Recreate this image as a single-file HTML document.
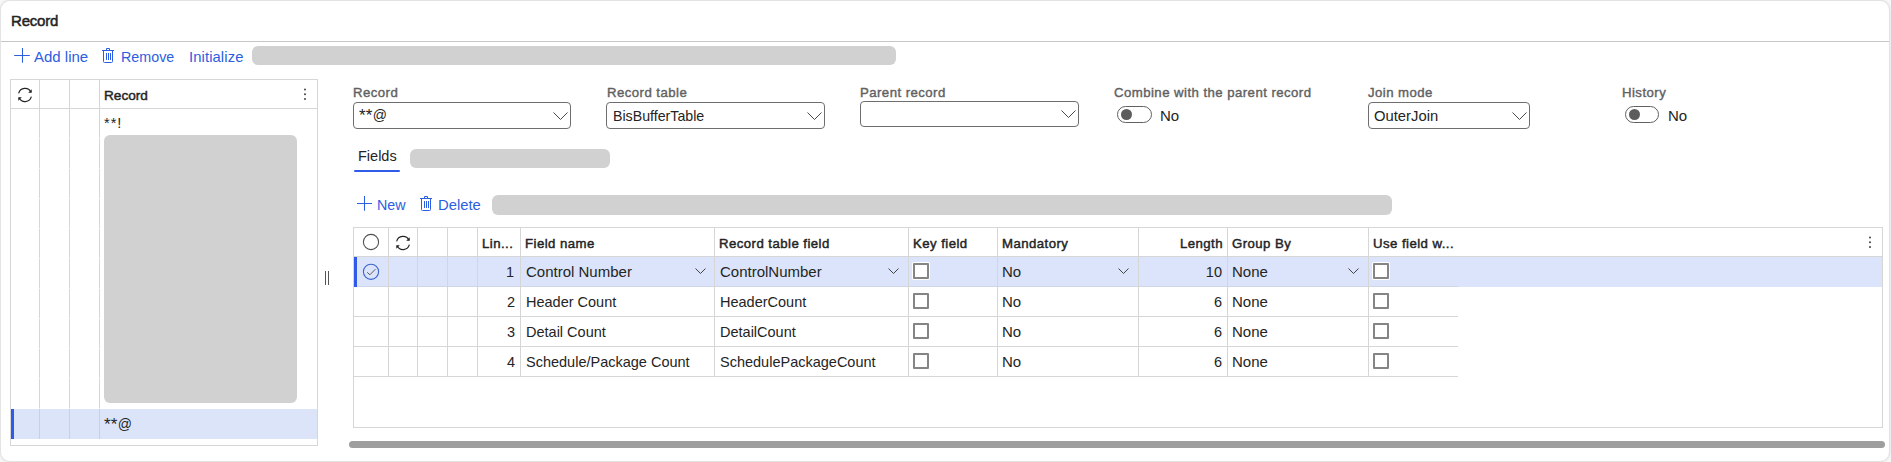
<!DOCTYPE html>
<html><head><meta charset="utf-8">
<style>
*{margin:0;padding:0;box-sizing:border-box}
html,body{width:1891px;height:462px;overflow:hidden;background:#f7f7f7;font-family:"Liberation Sans",sans-serif;color:#242424}
.card{position:absolute;left:0;top:0;width:1890px;height:462px;background:#fff;border:1px solid #e3e3e3;border-radius:10px;box-shadow:0 0 3px rgba(0,0,0,.10)}
.a{position:absolute;white-space:nowrap;line-height:1}
.bl{color:#2c5ee0}
.lbl{font-size:13.2px;letter-spacing:0.45px;-webkit-text-stroke:0.4px #616161;color:#616161}
.gph{position:absolute;background:#d1d1d1;border-radius:6px}
.hl{position:absolute;height:1px;background:#d6d6d6}
.vl{position:absolute;width:1px;background:#d6d6d6}
.inp{position:absolute;height:27px;border:1px solid #6e6e6e;border-radius:4px;background:#fff}
.hd{font-size:13.2px;letter-spacing:0.45px;-webkit-text-stroke:0.45px #242424;color:#242424}
.tx{font-size:14.5px;color:#242424}
.cb{position:absolute;width:16px;height:16px;border:2px solid #858585;border-radius:1px;background:#fff;box-shadow:0 0 0 1px #fff}
.tg{position:absolute;width:35px;height:17px;border:1px solid #616161;border-radius:9px;background:#fff}
.tg i{position:absolute;left:3px;top:2px;width:11px;height:11px;border-radius:50%;background:#5c5c5c}
svg{position:absolute;overflow:visible}
</style></head><body>
<div class="card"></div>

<!-- title -->
<div class="a" style="left:11px;top:13px;font-size:15px;letter-spacing:-0.2px;-webkit-text-stroke:0.5px #242424">Record</div>
<div class="hl" style="left:1px;top:41px;width:1888px;background:#c8c6c4"></div>

<!-- toolbar -->
<svg style="left:14px;top:48px" width="16" height="16" viewBox="0 0 16 16"><path d="M8.5 0V14.7M0.2 7.5H15.8" stroke="#2c5ee0" stroke-width="1.05" fill="none"/></svg>
<div class="a bl" style="left:34px;top:49px;font-size:15px">Add line</div>
<svg style="left:102px;top:48px" width="12" height="15" viewBox="0 0 12 15"><path d="M0 2.5H12M4.5 2.5V0.5H7.5V2.5M1.5 2.5V13.5Q1.5 14.5 2.5 14.5H9.5Q10.5 14.5 10.5 13.5V2.5M4.5 5V12M6.5 5V12M8.5 5V12" stroke="#2c5ee0" stroke-width="1" fill="none"/></svg>
<div class="a bl" style="left:121px;top:50px;font-size:14.3px">Remove</div>
<div class="a bl" style="left:189px;top:50px;font-size:14.8px;letter-spacing:0.1px">Initialize</div>
<div class="gph" style="left:252px;top:46px;width:644px;height:19px"></div>

<!-- left grid -->
<div style="position:absolute;left:10px;top:79px;width:308px;height:367px;border:1px solid #d6d6d6;background:#fff"></div>
<div class="hl" style="left:11px;top:108px;width:306px"></div>
<div class="vl" style="left:39px;top:80px;height:28px"></div>
<div class="vl" style="left:69px;top:80px;height:28px"></div>
<div class="vl" style="left:99px;top:80px;height:28px"></div>
<div class="vl" style="left:39px;top:109px;height:300px;background:repeating-linear-gradient(to bottom,#d6d6d6 0 29px,#eeeeee 29px 30px)"></div>
<div class="vl" style="left:69px;top:109px;height:300px;background:repeating-linear-gradient(to bottom,#d6d6d6 0 29px,#eeeeee 29px 30px)"></div>
<div class="vl" style="left:99px;top:109px;height:300px;background:repeating-linear-gradient(to bottom,#d6d6d6 0 29px,#eeeeee 29px 30px)"></div>
<svg style="left:17px;top:87px" width="16" height="16" viewBox="0 0 16 16"><path d="M1.625 6.29A6.6 6.6 0 0 1 13.98 5.21M14.375 9.71A6.6 6.6 0 0 1 2.02 10.79" stroke="#242424" stroke-width="1.15" fill="none"/><path d="M14.7 2.3V5.8H11.2Z M1.3 10.2H4.8L1.3 13.7Z" fill="#242424"/></svg>
<div class="a hd" style="left:104px;top:89px;font-size:13.6px;letter-spacing:0px">Record</div>
<svg style="left:303px;top:87px" width="4" height="14" viewBox="0 0 4 14"><circle cx="2" cy="2.5" r="1" fill="#424242"/><circle cx="2" cy="7.2" r="1" fill="#424242"/><circle cx="2" cy="11.9" r="1" fill="#424242"/></svg>
<div class="a tx" style="left:104px;top:116px;font-size:14.5px;letter-spacing:1px">**!</div>
<div class="gph" style="left:104px;top:135px;width:193px;height:268px"></div>
<div style="position:absolute;left:11px;top:409px;width:306px;height:30px;background:#dce4fa"></div>
<div style="position:absolute;left:11px;top:409px;width:3px;height:30px;background:#2f5be6"></div>
<div class="vl" style="left:39px;top:409px;height:30px;background:#cfcfd6"></div>
<div class="vl" style="left:69px;top:409px;height:30px;background:#cfcfd6"></div>
<div class="vl" style="left:99px;top:409px;height:30px;background:#cfcfd6"></div>
<div class="a tx" style="left:104px;top:417px;font-size:14px"><span style="font-size:17px;letter-spacing:0.2px;line-height:0;position:relative;top:1px">**</span>@</div>

<!-- splitter -->
<div class="vl" style="left:325px;top:271px;height:14px;background:#555"></div>
<div class="vl" style="left:328px;top:271px;height:14px;background:#555"></div>

<!-- form fields -->
<div class="a lbl" style="left:353px;top:86px">Record</div>
<div class="inp" style="left:353px;top:102px;width:218px"></div>
<div class="a tx" style="left:359px;top:108px;font-size:14px"><span style="font-size:17px;letter-spacing:0.2px;line-height:0;position:relative;top:1px">**</span>@</div>
<svg style="left:553px;top:112px" width="15" height="8" viewBox="0 0 15 8"><path d="M0.5 0.5L7.5 7.5L14.5 0.5" stroke="#4a4a4a" stroke-width="1" fill="none"/></svg>

<div class="a lbl" style="left:607px;top:86px">Record table</div>
<div class="inp" style="left:606px;top:102px;width:219px"></div>
<div class="a tx" style="left:613px;top:109px;font-size:14.2px">BisBufferTable</div>
<svg style="left:807px;top:112px" width="15" height="8" viewBox="0 0 15 8"><path d="M0.5 0.5L7.5 7.5L14.5 0.5" stroke="#4a4a4a" stroke-width="1" fill="none"/></svg>

<div class="a lbl" style="left:860px;top:86px">Parent record</div>
<div class="inp" style="left:860px;top:101px;width:219px;height:26px"></div>
<svg style="left:1061px;top:110px" width="15" height="8" viewBox="0 0 15 8"><path d="M0.5 0.5L7.5 7.5L14.5 0.5" stroke="#4a4a4a" stroke-width="1" fill="none"/></svg>

<div class="a lbl" style="left:1114px;top:86px">Combine with the parent record</div>
<div class="tg" style="left:1117px;top:106px"><i></i></div>
<div class="a tx" style="left:1160px;top:108px;font-size:15px">No</div>

<div class="a lbl" style="left:1368px;top:86px">Join mode</div>
<div class="inp" style="left:1368px;top:102px;width:162px"></div>
<div class="a tx" style="left:1374px;top:109px;font-size:14.8px">OuterJoin</div>
<svg style="left:1512px;top:112px" width="15" height="8" viewBox="0 0 15 8"><path d="M0.5 0.5L7.5 7.5L14.5 0.5" stroke="#4a4a4a" stroke-width="1" fill="none"/></svg>

<div class="a lbl" style="left:1622px;top:86px">History</div>
<div class="tg" style="left:1625px;top:106px;width:34px"><i></i></div>
<div class="a tx" style="left:1668px;top:108px;font-size:15px">No</div>

<!-- tab -->
<div class="a" style="left:358px;top:149px;font-size:14.5px;color:#242424">Fields</div>
<div style="position:absolute;left:354px;top:170px;width:46px;height:2px;border-radius:1px;background:#2f5be6"></div>
<div class="gph" style="left:410px;top:149px;width:200px;height:19px"></div>

<!-- fields toolbar -->
<svg style="left:357px;top:196px" width="16" height="16" viewBox="0 0 16 16"><path d="M7.5 0V14.8M0 7.5H15" stroke="#2c5ee0" stroke-width="1.05" fill="none"/></svg>
<div class="a bl" style="left:377px;top:198px;font-size:14.3px">New</div>
<svg style="left:420px;top:196px" width="12" height="15" viewBox="0 0 12 15"><path d="M0 2.5H12M4.5 2.5V0.5H7.5V2.5M1.5 2.5V13.5Q1.5 14.5 2.5 14.5H9.5Q10.5 14.5 10.5 13.5V2.5M4.5 5V12M6.5 5V12M8.5 5V12" stroke="#2c5ee0" stroke-width="1" fill="none"/></svg>
<div class="a bl" style="left:438px;top:198px;font-size:14.8px">Delete</div>
<div class="gph" style="left:492px;top:195px;width:900px;height:20px"></div>

<!-- main grid -->
<div style="position:absolute;left:353px;top:227px;width:1530px;height:201px;border:1px solid #d6d6d6;background:#fff"></div>
<div style="position:absolute;left:354px;top:257px;width:1528px;height:30px;background:#dbe4fa"></div>
<div style="position:absolute;left:354px;top:257px;width:3px;height:30px;background:#2f5be6"></div>
<div class="hl" style="left:354px;top:256px;width:1528px"></div>
<div class="hl" style="left:357px;top:286px;width:1101px;background:#cfd6ea"></div>
<div class="hl" style="left:354px;top:316px;width:1104px"></div>
<div class="hl" style="left:354px;top:346px;width:1104px"></div>
<div class="hl" style="left:354px;top:376px;width:1104px"></div>
<div class="vl" style="left:388px;top:228px;height:148px"></div>
<div class="vl" style="left:417px;top:228px;height:148px"></div>
<div class="vl" style="left:447px;top:228px;height:148px"></div>
<div class="vl" style="left:477px;top:228px;height:148px"></div>
<div class="vl" style="left:520px;top:228px;height:148px"></div>
<div class="vl" style="left:714px;top:228px;height:148px"></div>
<div class="vl" style="left:908px;top:228px;height:148px"></div>
<div class="vl" style="left:997px;top:228px;height:148px"></div>
<div class="vl" style="left:1138px;top:228px;height:148px"></div>
<div class="vl" style="left:1227px;top:228px;height:148px"></div>
<div class="vl" style="left:1368px;top:228px;height:148px"></div>

<!-- header -->
<svg style="left:362px;top:233px" width="18" height="18" viewBox="0 0 18 18"><circle cx="9" cy="9" r="7.6" stroke="#505050" stroke-width="1.1" fill="none"/></svg>
<svg style="left:395px;top:235px" width="16" height="16" viewBox="0 0 16 16"><path d="M1.625 6.29A6.6 6.6 0 0 1 13.98 5.21M14.375 9.71A6.6 6.6 0 0 1 2.02 10.79" stroke="#242424" stroke-width="1.15" fill="none"/><path d="M14.7 2.3V5.8H11.2Z M1.3 10.2H4.8L1.3 13.7Z" fill="#242424"/></svg>
<div class="a hd" style="left:482px;top:237px">Lin...</div>
<div class="a hd" style="left:525px;top:237px">Field name</div>
<div class="a hd" style="left:719px;top:237px">Record table field</div>
<div class="a hd" style="left:913px;top:237px">Key field</div>
<div class="a hd" style="left:1002px;top:237px">Mandatory</div>
<div class="a hd" style="left:1138px;top:237px;width:85px;text-align:right">Length</div>
<div class="a hd" style="left:1232px;top:237px">Group By</div>
<div class="a hd" style="left:1373px;top:237px">Use field w...</div>
<svg style="left:1868px;top:235px" width="4" height="14" viewBox="0 0 4 14"><circle cx="2" cy="2.5" r="1" fill="#424242"/><circle cx="2" cy="7.2" r="1" fill="#424242"/><circle cx="2" cy="11.9" r="1" fill="#424242"/></svg>

<!-- row 1 -->
<svg style="left:362px;top:263px" width="18" height="18" viewBox="0 0 18 18"><circle cx="9" cy="8.8" r="7.6" stroke="#3d64cf" stroke-width="1.1" fill="none"/><path d="M5.2 9.3L7.9 11.8L13.4 6.2" stroke="#5a5a5a" stroke-width="1" fill="none"/></svg>
<div class="a tx" style="left:478px;top:265px;width:36px;text-align:right">1</div>
<div class="a tx" style="left:526px;top:264px;font-size:15px">Control Number</div>
<svg style="left:695px;top:268px" width="11" height="7" viewBox="0 0 11 7"><path d="M0.5 0.5L5.5 5.5L10.5 0.5" stroke="#424242" stroke-width="1" fill="none"/></svg>
<div class="a tx" style="left:720px;top:264px;font-size:15px">ControlNumber</div>
<svg style="left:888px;top:268px" width="11" height="7" viewBox="0 0 11 7"><path d="M0.5 0.5L5.5 5.5L10.5 0.5" stroke="#424242" stroke-width="1" fill="none"/></svg>
<div class="cb" style="left:913px;top:263px"></div>
<div class="a tx" style="left:1002px;top:264px;font-size:15px">No</div>
<svg style="left:1118px;top:268px" width="11" height="7" viewBox="0 0 11 7"><path d="M0.5 0.5L5.5 5.5L10.5 0.5" stroke="#424242" stroke-width="1" fill="none"/></svg>
<div class="a tx" style="left:1138px;top:265px;width:84px;text-align:right">10</div>
<div class="a tx" style="left:1232px;top:264px;font-size:15px">None</div>
<svg style="left:1348px;top:268px" width="11" height="7" viewBox="0 0 11 7"><path d="M0.5 0.5L5.5 5.5L10.5 0.5" stroke="#424242" stroke-width="1" fill="none"/></svg>
<div class="cb" style="left:1373px;top:263px"></div>

<!-- row 2 -->
<div class="a tx" style="left:478px;top:295px;width:37px;text-align:right">2</div>
<div class="a tx" style="left:526px;top:295px">Header Count</div>
<div class="a tx" style="left:720px;top:295px">HeaderCount</div>
<div class="cb" style="left:913px;top:293px"></div>
<div class="a tx" style="left:1002px;top:294px;font-size:15px">No</div>
<div class="a tx" style="left:1138px;top:295px;width:84px;text-align:right">6</div>
<div class="a tx" style="left:1232px;top:294px;font-size:15px">None</div>
<div class="cb" style="left:1373px;top:293px"></div>

<!-- row 3 -->
<div class="a tx" style="left:478px;top:325px;width:37px;text-align:right">3</div>
<div class="a tx" style="left:526px;top:325px">Detail Count</div>
<div class="a tx" style="left:720px;top:325px">DetailCount</div>
<div class="cb" style="left:913px;top:323px"></div>
<div class="a tx" style="left:1002px;top:324px;font-size:15px">No</div>
<div class="a tx" style="left:1138px;top:325px;width:84px;text-align:right">6</div>
<div class="a tx" style="left:1232px;top:324px;font-size:15px">None</div>
<div class="cb" style="left:1373px;top:323px"></div>

<!-- row 4 -->
<div class="a tx" style="left:478px;top:355px;width:37px;text-align:right">4</div>
<div class="a tx" style="left:526px;top:355px">Schedule/Package Count</div>
<div class="a tx" style="left:720px;top:355px">SchedulePackageCount</div>
<div class="cb" style="left:913px;top:353px"></div>
<div class="a tx" style="left:1002px;top:354px;font-size:15px">No</div>
<div class="a tx" style="left:1138px;top:355px;width:84px;text-align:right">6</div>
<div class="a tx" style="left:1232px;top:354px;font-size:15px">None</div>
<div class="cb" style="left:1373px;top:353px"></div>

<!-- scrollbar -->
<div style="position:absolute;left:349px;top:441px;width:1536px;height:7px;border-radius:4px;background:#9e9e9e"></div>

</body></html>
